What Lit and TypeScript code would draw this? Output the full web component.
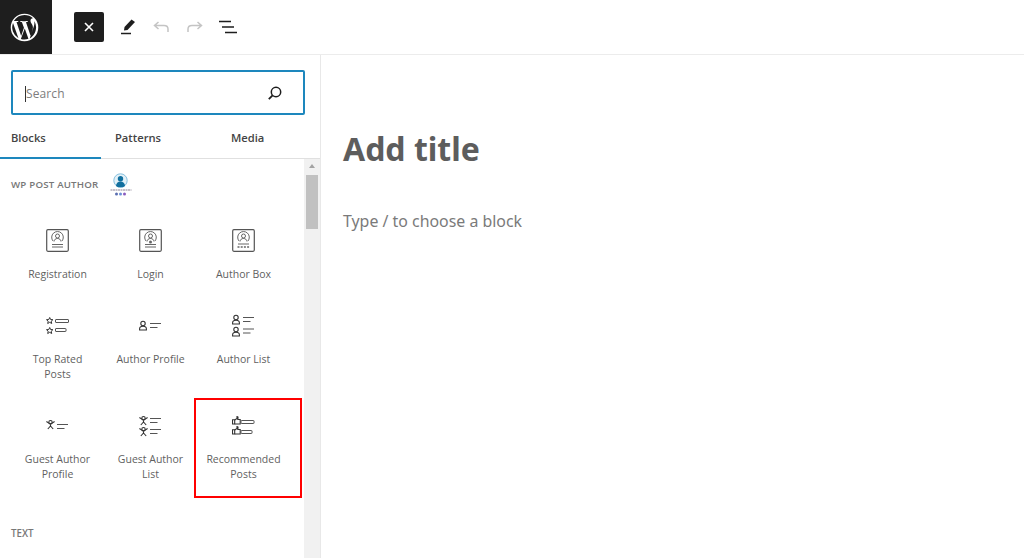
import { LitElement, html, css, svg } from "lit";
import { customElement } from "lit/decorators.js";

const person = (x: number, y: number) => svg`<g transform="translate(${x} ${y})" fill="none" stroke="#333" stroke-width="1.100"><circle cx="4" cy="2.500" r="2.200"/><path d="M.6 9V7.800C.6 6 2 5.200 4 5.200s3.400.8 3.400 2.600V9Z"/></g>`;
const star = (x: number, y: number) => svg`<path transform="translate(${x} ${y})" fill="none" stroke="#333" stroke-width="1" d="M3.700.5l.9 2 2.300.2-1.700 1.500.5 2.300-2-1.200-2 1.200.5-2.300L.5 2.700l2.300-.2Z"/>`;
const bar = (x: number, y: number, w: number) => svg`<rect x=${x} y=${y} width=${w} height="3" rx=".5" fill="none" stroke="#555" stroke-width="1"/>`;
const lines = (x: number, y: number) => svg`<g stroke="#555" stroke-width="1"><path d="M${x} ${y}h11"/><path d="M${x} ${y + 4}h7.500"/></g>`;
const guest = (x: number, y: number) => svg`<g transform="translate(${x} ${y})" fill="none" stroke="#333" stroke-width="1.100"><circle cx="4.500" cy="2.200" r="1.700"/><path d="M.4 1.500 4.500 4.200l4.100-2.700M4.500 4v2M1.800 9l2.700-3 2.700 3"/></g>`;
const thumb = (x: number, y: number) => svg`<g transform="translate(${x} ${y})" fill="none" stroke="#333" stroke-width="1.100"><path d="M.5 3.800h2.200v4.200H.5Z"/><path d="M2.700 4 5 2.500V.5c.8 0 1.100.6 1 1.400L5.800 3.500h2.400V8H2.700"/></g>`;

const cert = (inner: unknown) => svg`<svg width="24" height="24" viewBox="0 0 24 24"><rect x=".7" y=".7" width="21.600" height="21.600" rx="1.200" fill="none" stroke="#555" stroke-width="1.200"/><g fill="none" stroke="#555" stroke-width=".9"><path d="M7 12a5.800 5.800 0 1 1 9 0"/><circle cx="11.500" cy="7" r="2"/><path d="M8 12.500c.3-2 1.600-3 3.500-3s3.200 1 3.500 3"/></g>${inner}</svg>`;

const icons: Record<string, unknown> = {
  reg: cert(svg`<g stroke="#666" stroke-width="1"><path d="M6 15.500h11M6 18h11"/></g>`),
  login: cert(svg`<circle cx="11.500" cy="13" r="1.500" fill="#666"/><g stroke="#666" stroke-width="1"><path d="M6 15.500h11M6 18h11"/></g>`),
  box: cert(svg`<g stroke="#666" stroke-width="1"><path d="M6 15h11"/><path d="M5.500 18h12" stroke-dasharray="2 1.200" stroke-width="1.500"/></g>`),
  top: svg`<svg width="24" height="24" viewBox="0 0 24 24">${star(0, 3)}${bar(9.500, 5.500, 13)}${star(0, 13)}${bar(9.500, 14.500, 10.500)}</svg>`,
  profile: svg`<svg width="24" height="24" viewBox="0 0 24 24">${person(0, 7)}${lines(11, 9.500)}</svg>`,
  list: svg`<svg width="24" height="24" viewBox="0 0 24 24">${person(0, 1)}${lines(11, 3.500)}${person(0, 13)}${lines(11, 15)}</svg>`,
  guest: svg`<svg width="24" height="24" viewBox="0 0 24 24">${guest(0, 6)}${lines(11, 10.500)}</svg>`,
  guests: svg`<svg width="24" height="24" viewBox="0 0 24 24">${guest(0, 2)}${lines(11, 4.500)}${guest(0, 13)}${lines(11, 15.500)}</svg>`,
  rec: svg`<svg width="24" height="24" viewBox="0 0 24 24">${thumb(0, 2)}${bar(9, 6.500, 13)}${thumb(0, 12)}${bar(9, 16.500, 11)}</svg>`,
};

const rows = [
  { key: "reg", label: "Registration" }, { key: "login", label: "Login" }, { key: "box", label: "Author Box" },
  { key: "top", label: "Top Rated Posts" }, { key: "profile", label: "Author Profile" }, { key: "list", label: "Author List" },
  { key: "guest", label: "Guest Author Profile" }, { key: "guests", label: "Guest Author List" }, { key: "rec", label: "Recommended Posts", mark: true },
];

@customElement("app-root")
export class AppRoot extends LitElement {
  static styles = css`
    :host { display: block; width: 1024px; height: 558px; overflow: hidden; background: #fff; font-family: "Open Sans", "Noto Sans", sans-serif; color: #1e1e1e; }
    .top { display: flex; align-items: center; height: 54px; border-bottom: 1px solid #ececec; }
    .logo { width: 52px; height: 54px; background: #1e1e1e; display: flex; align-items: center; justify-content: center; padding-right: 4px; box-sizing: border-box; }
    .tools { display: flex; align-items: center; margin-left: 22px; gap: 16px; }
    .close { width: 30px; height: 30px; background: #1e1e1e; border-radius: 2px; display: flex; align-items: center; justify-content: center; margin-right: -1px; }
    .tool { display: flex; }
    .main { display: flex; height: 503px; }
    .side { width: 320px; border-right: 1px solid #e8e8e8; display: flex; flex-direction: column; box-sizing: content-box; flex: none; }
    .search { margin: 15px 15px 0 11px; height: 45px; box-sizing: border-box; border: 2px solid #1d87bd; border-radius: 2px; display: flex; align-items: center; padding: 0 20px 0 12px; justify-content: space-between; }
    .ph { font-size: 12px; color: #7d7d7d; border-left: 1px solid #333; line-height: 16px; letter-spacing: .1px; margin-top: 2px; }
    .tabs { display: grid; grid-template-columns: 101px 74px 1fr; height: 42px; border-bottom: 1px solid #e0e0e0; margin-top: 1px; }
    .tab { font-size: 11.200px; font-weight: 600; color: #444; display: flex; align-items: center; justify-content: center; }
    .tab.on { justify-content: flex-start; padding: 2px 0 0 11px; border-bottom: 2px solid #1d87bd; height: 43px; box-sizing: border-box; }
    .tab.media { padding-left: 56px; justify-content: flex-start; }
    .body { display: flex; flex: 1; min-height: 0; }
    .panel { width: 304px; flex: none; }
    .head { display: flex; height: 57px; padding-left: 11px; gap: 11px; align-items: flex-start; }
    .cat { font-size: 9.700px; font-weight: 600; color: #777; letter-spacing: .2px; line-height: 13px; margin-top: 19px; }
    .avatar { margin-top: 13px; display: flex; }
    .grid { display: grid; grid-template-columns: repeat(3, 93px); grid-template-rows: 86px 99px 99px; margin-left: 11px; }
    .item { display: flex; flex-direction: column; align-items: center; box-sizing: border-box; padding-top: 13px; position: relative; }
    .ic { height: 24px; width: 24px; display: flex; align-items: center; justify-content: center; margin-bottom: 14px; }
    .lab { font-size: 10.500px; line-height: 15px; color: #5f5f5f; text-align: center; width: 76px; }
    .grid .item:nth-child(n+4) { padding-top: 12px; }
    .grid .item:nth-child(n+7) { padding-top: 13px; }
    .mark { position: absolute; left: -3px; top: -3px; width: 108px; height: 100px; border: 2px solid #f00; box-sizing: border-box; }
    .text { font-size: 9.800px; font-weight: 600; color: #777; margin: 27px 0 0 11px; line-height: 13px; }
    .scroll { width: 16px; background: #f1f1f1; position: relative; flex: none; }
    .arrow { position: absolute; left: 4.500px; top: 5px; width: 0; height: 0; border-left: 3.500px solid transparent; border-right: 3.500px solid transparent; border-bottom: 4px solid #a3a3a3; }
    .bar { position: absolute; left: 2px; top: 16px; width: 12px; height: 54px; background: #c1c1c1; }
    .editor { flex: 1; padding: 72px 0 0 22px; }
    h1 { margin: 0; font-size: 32px; line-height: 44px; font-weight: 700; color: #5d5d5d; font-family: "Noto Sans", "Open Sans", sans-serif; }
    .hint { margin-top: 38px; font-size: 15.900px; line-height: 24px; color: #7a7a7a; font-family: "Noto Sans", "Open Sans", sans-serif; }
  `;

  render() {
    return html`
      <div class="top">
        <div class="logo">
          <svg width="29" height="29" viewBox="0 0 24 24" fill="#fff"><path d="M12 .6a11.400 11.400 0 1 0 0 22.800A11.400 11.400 0 0 0 12 .6Zm0 1a10.400 10.400 0 0 1 7.050 2.750h-.2c-1.100 0-1.900 1-1.900 2 0 .95.550 1.750 1.100 2.700.45.750.9 1.650.9 3 0 .9-.350 2-.8 3.500l-1.050 3.500-3.850-11.400c.65-.05 1.200-.1 1.200-.1.550-.1.500-.9-.06-.85 0 0-1.700.13-2.800.13-1 0-2.750-.13-2.750-.13-.55-.05-.6.800-.05.850 0 0 .55.050 1.100.1l1.650 4.500-2.300 6.900L5.400 7.500c.65-.05 1.200-.1 1.200-.1.550-.1.500-.9-.05-.85 0 0-1.700.13-2.800.13h-.6A10.400 10.400 0 0 1 12 1.600ZM2.500 8.200 7 20.900A10.400 10.400 0 0 1 2.500 8.200Zm9.700 4.700 3.050 8.350.05.150a10.400 10.400 0 0 1-6.300.15Zm8.150-5.800A10.400 10.400 0 0 1 16.300 21l3.100-9c.6-1.450.8-2.650.8-3.700 0-.400-.02-.800-.05-1.200Z"/></svg>
        </div>
        <div class="tools">
          <div class="close"><svg width="12" height="12" viewBox="0 0 12 12"><path d="M2 2l8 8M10 2l-8 8" stroke="#fff" stroke-width="1.600"/></svg></div>
          <div class="tool"><svg width="18" height="18" viewBox="0 0 18 18"><path d="M12.500 1.500 16 4 8.500 12 5 12.500 5.500 9Z" fill="#1e1e1e"/><path d="M2 15.500h10" stroke="#1e1e1e" stroke-width="1.500"/></svg></div>
          <div class="tool"><svg width="17" height="12" viewBox="0 0 17 12"><path d="M5.500 1 1.500 4.500l4 3.500M2 4.500h9c2.500 0 4 1.500 4 3.500v3" fill="none" stroke="#c4c4c4" stroke-width="1.500"/></svg></div>
          <div class="tool"><svg width="17" height="12" viewBox="0 0 17 12"><path d="M11.500 1l4 3.500-4 3.500M15 4.500H6C3.500 4.500 2 6 2 8v3" fill="none" stroke="#c4c4c4" stroke-width="1.500"/></svg></div>
          <div class="tool"><svg width="18" height="14" viewBox="0 0 18 14"><path d="M0 1.500h12M3 7h12M6 12.500h12" stroke="#1e1e1e" stroke-width="1.600"/></svg></div>
        </div>
      </div>
      <div class="main">
        <div class="side">
          <div class="search">
            <span class="ph">Search</span>
            <svg width="16" height="16" viewBox="0 0 16 16" fill="none" stroke="#1e1e1e"><circle cx="9" cy="7" r="4.700" stroke-width="1.500"/><path d="M5.600 10.400 1.800 14.200" stroke-width="1.800"/></svg>
          </div>
          <div class="tabs">
            <div class="tab on">Blocks</div><div class="tab">Patterns</div><div class="tab media">Media</div>
          </div>
          <div class="body">
            <div class="panel">
              <div class="head">
                <div class="cat">WP POST AUTHOR</div>
                <div class="avatar">
                  <svg width="22" height="25" viewBox="0 0 22 25"><circle cx="10.500" cy="8.500" r="6.700" fill="#e3f1f8" stroke="#86c0df" stroke-width="1"/><circle cx="10.500" cy="6.800" r="2.700" fill="#12709f"/><path d="M6 14a4.500 4.500 0 0 1 9 0l-2 1.300H8Z" fill="#12709f"/><path d="M.5 18h21" stroke="#8c8496" stroke-width="1" stroke-dasharray="2 .5"/><circle cx="6.500" cy="22" r="1.500" fill="#5b6fb0"/><circle cx="10.500" cy="22" r="1.500" fill="#6d90d8"/><circle cx="14.500" cy="22" r="1.500" fill="#8a5cc0"/></svg>
                </div>
              </div>
              <div class="grid">
                ${rows.map((r) => html`<div class="item">
                  ${r.mark ? html`<div class="mark"></div>` : ""}
                  <div class="ic">${icons[r.key]}</div>
                  <div class="lab">${r.label}</div>
                </div>`)}
              </div>
              <div class="text">TEXT</div>
            </div>
            <div class="scroll"><div class="arrow"></div><div class="bar"></div></div>
          </div>
        </div>
        <div class="editor">
          <h1>Add title</h1>
          <div class="hint">Type / to choose a block</div>
        </div>
      </div>
    `;
  }
}
